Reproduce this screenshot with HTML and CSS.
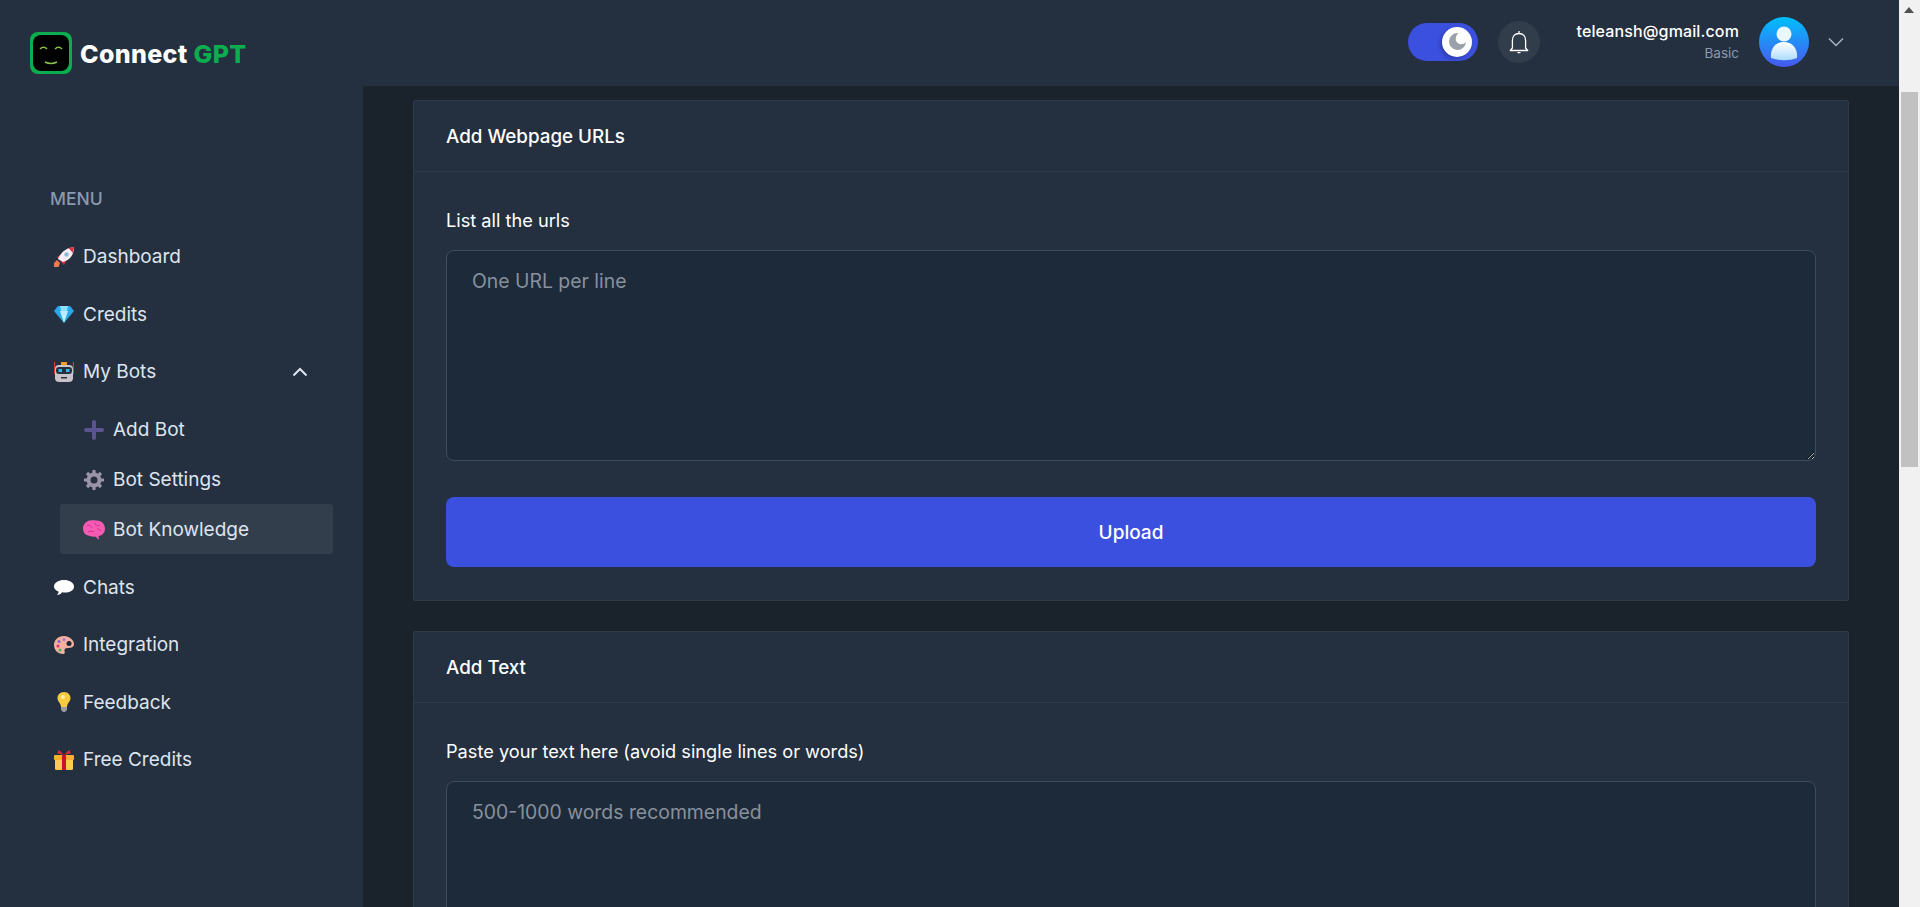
FILE: index.html
```html
<!DOCTYPE html>
<html lang="en">
<head>
<meta charset="utf-8">
<title>Connect GPT - Bot Knowledge</title>
<link rel="stylesheet" href="styles.css">
</head>
<body>
<div class="app">
  <aside class="sidebar">
    <div class="brand">
      <svg class="brand-mark" viewBox="0 0 42 42"><rect width="42" height="42" rx="8" fill="#0bad4f"/><rect x="3" y="3" width="36" height="36" rx="8" fill="#000"/><path d="M10 17q3.500-3.500 7 0M25 17q3.500-3.500 7 0M15 30q6 3 12 0" fill="none" stroke="#8bc34a" stroke-width="1.500"/></svg>
      <span class="brand-name">Connect <span class="brand-accent">GPT</span></span>
    </div>
    <h2 class="menu-title">MENU</h2>
    <nav class="nav">
      <a class="nav-item"><svg class="emoji" viewBox="0 0 20 20"><path d="M0 16l3-3 3 3-1.500 4H0z" fill="#f4794c"/><path d="M3 10l3-2 6 6-2 4z" fill="#dd2e44"/><path d="M4 12C7 5 12 1 20 0c0 8-4 13-11 15z" fill="#f4f0f4"/><path d="M14.500 1L20 0l-1 6z" fill="#dd2e44"/><circle cx="12.500" cy="7.500" r="2.200" fill="#8fb8d8"/></svg><span>Dashboard</span></a>
      <a class="nav-item"><svg class="emoji" viewBox="0 0 20 20"><path d="M4 2h12l4 5-10 12L0 7z" fill="#29a9ea"/><path d="M6 7l4 12 4-12z" fill="#bdeeff"/><path d="M6 2h8l-1 5H7z" fill="#8ce0ff"/></svg><span>Credits</span></a>
      <a class="nav-item nav-open"><svg class="emoji" viewBox="0 0 20 20"><path d="M.6 0v12M19.400 0v12" stroke="#d83b2d" stroke-width="1.200"/><rect x="7" y="0" width="6" height="3" fill="#f39c24"/><rect x="1" y="3" width="18" height="17" rx="4" fill="#c9c2cb"/><rect x="2" y="5" width="16" height="7" rx="3" fill="#26303c"/><rect x="4.500" y="7" width="3.500" height="3" fill="#35b5ea"/><rect x="12" y="7" width="3.500" height="3" fill="#35b5ea"/><rect x="7" y="15" width="6" height="1.500" fill="#26303c"/></svg><span>My Bots</span><svg class="chevron" viewBox="0 0 16 10"><path d="M1.500 8.500L8 2l6.500 6.500" fill="none" stroke="#dee4ee" stroke-width="2"/></svg></a>
      <div class="subnav">
        <a class="sub-item"><svg class="emoji" viewBox="0 0 20 20"><path d="M10 2v16M2 10h16" stroke="#5c5490" stroke-width="4" stroke-linecap="round"/></svg><span>Add Bot</span></a>
        <a class="sub-item"><svg class="emoji" viewBox="0 0 20 20"><circle cx="10" cy="10" r="5.500" fill="none" stroke="#9b93a6" stroke-width="4"/><path d="M10 0v4M10 16v4M0 10h4M16 10h4M3 3l3 3M14 14l3 3M17 3l-3 3M6 14l-3 3" stroke="#9b93a6" stroke-width="3.200"/></svg><span>Bot Settings</span></a>
        <a class="sub-item sub-active"><svg class="emoji brain" viewBox="0 0 22 20"><path d="M7 .5C9 0 13 0 15 .8c4 .5 7 3.700 7 7.700 0 4-2.500 7-6.500 7.500L16 20l-3.500-3.500C10 17 7.500 16.500 5.500 15.500 2 15 0 12 0 8.500 0 4.500 3 1 7 .5z" fill="#f75ab2"/><path d="M4 6c2-2 4 0 5 2M12 3c0 3 3 3 5 2M5 12c2-1 4-1 6 0M14 9c2 0 3 1 4 2" fill="none" stroke="#c42c83" stroke-width=".8"/></svg><span>Bot Knowledge</span></a>
      </div>
      <a class="nav-item"><svg class="emoji" viewBox="0 0 20 20"><path d="M10 3c5 0 10 2.500 10 6.500 0 4-4.500 6-9 6-1 0-2 0-3-.200C7 17 5 18 3 18c1-1 1.500-2 1.500-3.500C2 13.500 0 12 0 9.500 0 5.500 5 3 10 3z" fill="#fff"/></svg><span>Chats</span></a>
      <a class="nav-item"><svg class="emoji" viewBox="0 0 20 20"><path d="M10 1C4 1 0 5 0 10s4 9 9 9c2 0 2-2 1.500-3-.5-2 1-3 3-3 4 0 6.500-1 6.500-4 0-4-5-8-10-8z" fill="#f3b09f"/><circle cx="5" cy="6.500" r="1.500" fill="#8d5fc9"/><circle cx="10" cy="4.500" r="1.500" fill="#a678dd"/><circle cx="4" cy="11" r="1.500" fill="#e6286e"/><circle cx="6" cy="15" r="1.500" fill="#30b96a"/><circle cx="15" cy="8.500" r="2.500" fill="#1f2833"/></svg><span>Integration</span></a>
      <a class="nav-item"><svg class="emoji" viewBox="0 0 20 20"><path d="M10 0c4 0 6.500 3 6.500 6 0 4-3.500 5-3.500 9H7C7 11 3.500 10 3.500 6c0-3 2.500-6 6.500-6z" fill="#fbcb3f"/><path d="M7 15h6v3l-2 2H9l-2-2z" fill="#9a9aa0"/><circle cx="9" cy="5" r="2" fill="#fff2a8"/></svg><span>Feedback</span></a>
      <a class="nav-item"><svg class="emoji" viewBox="0 0 20 20"><rect x="1" y="8" width="18" height="12" rx="1.500" fill="#fdcb4f"/><rect y="5" width="20" height="5" rx="1" fill="#fdb12f"/><rect x="8" y="5" width="4" height="15" fill="#c8142f"/><path d="M10 5L5 0 3 3zM10 5l5-5 2 3z" fill="#e02b3e"/></svg><span>Free Credits</span></a>
    </nav>
  </aside>
  <div class="content">
    <header class="topbar">
      <div class="toggle"><span class="knob"><svg class="moon" viewBox="0 0 18 18"><path d="M9 0a9 9 0 1 0 9 9.500C15 13 9 12.500 7.500 8.500 6.500 5 8 2 10 .1 9.700 0 9.300 0 9 0z" fill="#9ba1aa"/></svg></span></div>
      <div class="bell"><svg viewBox="0 0 20 24"><path d="M10 1v2.500M10 3.500c-4.200 0-6.600 3-6.600 7v7.500L1.300 20.500h17.400L16.600 18v-7.500c0-4-2.400-7-6.600-7zM8.500 22.700h3" fill="none" stroke="#fff" stroke-width="1.300" stroke-linejoin="round"/></svg></div>
      <div class="user"><span class="user-mail">teleansh@gmail.com</span><span class="user-plan">Basic</span></div>
      <svg class="avatar" viewBox="0 0 50 50"><defs><linearGradient id="av" x1="0" y1="0" x2="0" y2="1"><stop offset="0" stop-color="#00c0ff"/><stop offset="1" stop-color="#4858ee"/></linearGradient><linearGradient id="bd" x1="0" y1="0" x2="0" y2="1"><stop offset="0" stop-color="#fff"/><stop offset="1" stop-color="#aedcff"/></linearGradient></defs><circle cx="25" cy="25" r="25" fill="url(#av)"/><circle cx="25" cy="17" r="7.500" fill="#eaf7ff"/><path d="M12 41c-1-10 5-16 13-16s14 6 13 16c-8 3-18 3-26 0z" fill="url(#bd)"/></svg>
      <svg class="caret" viewBox="0 0 16 10"><path d="M1 1.500l7 7 7-7" fill="none" stroke="#a9b4c2" stroke-width="1.400"/></svg>
    </header>
    <main class="main">
      <section class="card">
        <h3 class="card-title">Add Webpage URLs</h3>
        <div class="card-body">
          <label class="field-label">List all the urls</label>
          <textarea class="field short" placeholder="One URL per line"></textarea>
          <button class="primary">Upload</button>
        </div>
      </section>
      <section class="card">
        <h3 class="card-title">Add Text</h3>
        <div class="card-body">
          <label class="field-label">Paste your text here (avoid single lines or words)</label>
          <textarea class="field tall" placeholder="500-1000 words recommended"></textarea>
        </div>
      </section>
    </main>
  </div>
  <div class="scrollbar">
    <span class="scroll-arrow"></span>
    <span class="scroll-thumb"></span>
  </div>
</div>
</body>
</html>
```
FILE: styles.css
```css
* { box-sizing: border-box; }
html, body { margin: 0; height: 907px; overflow: hidden; }
body { font-family: "Inter", "Liberation Sans", sans-serif; background: #1a222c; color: #dee4ee; }
.app { display: flex; height: 907px; }
.sidebar { width: 363px; flex: none; background: #24303f; }
.brand { display: flex; align-items: center; gap: 8px; height: 42px; margin: 32px 0 0 30px; }
.brand-mark { width: 42px; height: 42px; flex: none; }
.brand-name { font-family: "Inter", sans-serif; font-weight: 800; font-size: 25px; letter-spacing: .35px; padding-top: 2px; color: #fff; }
.brand-accent { color: #0bad4f; }
.menu-title { margin: 114px 0 0 50px; font-size: 17.500px; line-height: 22px; font-weight: 500; color: #8a99af; }
.nav { display: flex; flex-direction: column; gap: 8px; margin: 21px 30px 0 0; font-size: 19px; font-weight: 400; }
.nav-item { display: flex; align-items: center; gap: 9px; height: 49.500px; padding: 2px 0 0 54px; }
.emoji { width: 20px; height: 20px; flex: none; }
.brain { width: 22px; margin: 0 -1px; }
.chevron { width: 16px; height: 10px; margin-left: auto; margin-right: 4px; }
.nav-open .chevron { margin-right: 25px; }
.subnav { display: flex; flex-direction: column; margin-left: 60px; }
.sub-item { display: flex; align-items: center; gap: 9px; width: 273px; height: 50px; padding: 2px 0 0 24px; border-radius: 3px; }
.sub-active { background: #333e4d; }
.content { flex: 1; min-width: 0; display: flex; flex-direction: column; }
.topbar { height: 86px; flex: none; background: #24303f; display: flex; align-items: center; padding: 0 55px 3px 0; justify-content: flex-end; }
.toggle { width: 70px; height: 38px; border-radius: 19px; background: #3c50e0; display: flex; align-items: center; justify-content: flex-end; padding-right: 6px; }
.knob { width: 30px; height: 30px; border-radius: 50%; background: #fff; display: flex; align-items: center; justify-content: center; box-shadow: -2px 2px 4px rgba(0,0,0,.25); }
.moon { width: 17px; height: 17px; }
.bell { width: 42px; height: 42px; margin-left: 20px; border-radius: 50%; background: #313d4a; display: flex; align-items: center; justify-content: center; }
.bell svg { width: 20px; height: 24px; }
.user { display: flex; flex-direction: column; align-items: flex-end; margin-left: 36px; }
.user-mail { font-size: 16px; line-height: 22px; font-weight: 500; letter-spacing: .13px; color: #fff; }
.user-plan { font-size: 13.500px; line-height: 22px; color: #8a99af; }
.avatar { width: 50px; height: 50px; margin-left: 20px; }
.caret { width: 16px; height: 10px; margin-left: 19px; }
.main { flex: 1; min-height: 0; overflow: hidden; padding: 14px 50px 0 50px; display: flex; flex-direction: column; gap: 30px; }
.card { flex: none; background: #24303f; border: 1px solid #2e3a47; border-radius: 2px; }
.card-title { margin: 0; height: 71px; padding-left: 32px; display: flex; align-items: center; font-size: 18.800px; font-weight: 500; color: #fff; border-bottom: 1px solid #2e3a47; }
.card-body { padding: 35px 32px 33px; display: flex; flex-direction: column; }
.field-label { font-size: 18.200px; line-height: 26px; color: #fff; margin-bottom: 17px; }
.field { display: block; width: 100%; background: #1d2a39; border: 1.500px solid #3d4d5c; border-radius: 8px; padding: 17px 25px; font: 400 19.400px/26px "Inter", sans-serif; color: #fff; outline: none; color-scheme: dark; }
.field::placeholder { color: #87919d; opacity: 1; }
.short { height: 211px; margin-bottom: 36px; }
.tall { height: 211px; }
.primary { height: 70px; border: 0; border-radius: 8px; background: #3c50e0; color: #fff; font: 500 19px "Inter", sans-serif; }
.scrollbar { width: 21px; flex: none; background: #f1f1f1; position: relative; }
.scroll-arrow { position: absolute; left: 5px; top: 7px; border: 5.500px solid transparent; border-top: 0; border-bottom: 6px solid #505050; }
.scroll-thumb { position: absolute; left: 2px; width: 17px; top: 92px; height: 375px; background: #c1c1c1; }
```
